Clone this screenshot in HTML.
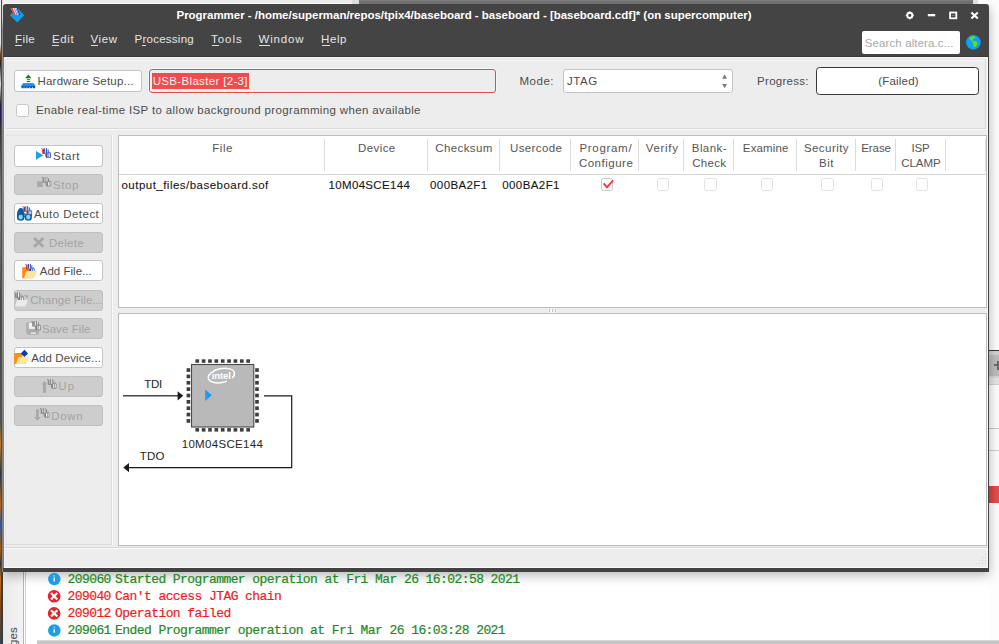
<!DOCTYPE html>
<html><head><meta charset="utf-8"><title>Programmer</title>
<style>
html,body{margin:0;padding:0;}
body{width:999px;height:644px;overflow:hidden;background:#ffffff;position:relative;font-family:"Liberation Sans",sans-serif;}
.a{position:absolute;box-sizing:border-box;}
.t{position:absolute;white-space:pre;line-height:normal;}
.btn{position:absolute;box-sizing:border-box;left:14.2px;width:88.6px;height:21.5px;border:1px solid #c4c4c4;border-radius:3px;background:#ffffff;}
.btn.d{background:#cdcdcd;border-color:#c0c0c0;}
.sep{position:absolute;top:139px;width:1px;height:32px;background:#dcdcdc;}
.cb{position:absolute;box-sizing:border-box;top:178.4px;width:12.2px;height:12.3px;border:1px solid #e2e2e2;border-radius:2.5px;background:#ffffff;}
</style></head><body>
<!-- ===== desktop / background pieces ===== -->
<!-- right of window -->
<div class="a" style="left:989px;top:4px;width:10px;height:636px;background:#fdfdfd;"></div>
<div class="a" style="left:989px;top:350px;width:10px;height:1px;background:#3a3a3a;"></div>
<div class="a" style="left:989px;top:351px;width:10px;height:4px;background:#d2d2d2;"></div>
<div class="a" style="left:989px;top:355px;width:10px;height:21px;background:#bcbcbc;"></div>
<div class="a" style="left:989px;top:376px;width:10px;height:2px;background:#d6d6d6;"></div>
<div class="a" style="left:989px;top:378px;width:10px;height:6px;background:#e4e4e4;"></div>
<div class="a" style="left:989px;top:384px;width:10px;height:1px;background:#cfcfcf;"></div>
<div class="a" style="left:994px;top:364px;width:5px;height:2px;background:#6a6a6a;"></div>
<div class="a" style="left:997px;top:361px;width:2px;height:9px;background:#6a6a6a;"></div>
<div class="a" style="left:989px;top:428px;width:10px;height:1px;background:#c8c8c8;"></div>
<div class="a" style="left:989px;top:450px;width:10px;height:1px;background:#d0d0d0;"></div>
<div class="a" style="left:989px;top:486px;width:10px;height:17px;background:linear-gradient(90deg,#d84343,#ec5050);"></div>
<!-- ===== messages panel (behind window) ===== -->
<div class="a" style="left:3px;top:572px;width:20px;height:72px;background:linear-gradient(90deg,#e9e9e9,#f4f4f4);"></div>
<div class="a" style="left:22.5px;top:572px;width:1.5px;height:72px;background:#b4b4b4;"></div>
<div class="a" style="left:24.5px;top:572px;width:1px;height:72px;background:#cfcfcf;"></div>
<div class="a" style="left:37px;top:640px;width:962px;height:1px;background:#dadada;"></div>
<div class="a" style="left:37px;top:641px;width:962px;height:3px;background:#c6c6c6;"></div>
<div class="t" style="left:6.6px;top:727.2px;width:100px;font-size:11.5px;color:#4a4a4a;transform-origin:0 0;transform:rotate(-90deg);text-align:right;letter-spacing:0.15px;">Messages</div>

<!-- ===== window ===== -->
<div class="a" id="win" style="left:3px;top:4px;width:986px;height:568px;background:#ededed;border-radius:3px 3px 0 0;box-shadow:0 3px 12px rgba(0,0,0,0.30);"></div>
<!-- top strip (desktop above window) -->
<div class="a" style="left:0;top:0;width:999px;height:4px;background:#ececec;"></div>
<div class="a" style="left:0;top:2.5px;width:352px;height:1.5px;background:#fafafa;"></div>
<div class="a" style="left:352px;top:0;width:7px;height:4px;background:#dddddd;"></div>
<div class="a" style="left:359px;top:0;width:614px;height:4px;background:#6f6f6f;"></div>
<div class="a" style="left:359px;top:0;width:614px;height:1px;background:#7c7c7c;"></div>
<div class="a" style="left:973px;top:0;width:5px;height:4px;background:#e0e0e0;"></div>
<div class="a" style="left:978px;top:0;width:21px;height:4px;background:#fbfbfb;"></div>
<!-- left sliver -->
<div class="a" style="left:0;top:4px;width:1px;height:640px;background:linear-gradient(180deg,#e8e8e8 0,#e8e8e8 40px,#7a4a20 50px,#222 60px,#ddd 80px,#223 100px,#1a1460 112px,#333 125px,#888 200px,#444 300px,#555 420px,#c87a20 440px,#234 470px,#b86a18 500px,#2a5aa0 520px,#a85a10 545px,#333 560px,#c87020 575px,#8a4a10 600px,#345 640px);"></div>
<div class="a" style="left:1px;top:0;width:1px;height:572px;background:#4c4c4c;"></div>
<div class="a" style="left:2px;top:0;width:1px;height:572px;background:linear-gradient(180deg,#dcdcdc 0,#d4d4d4 18px,#8a8a8a 30px,#848484 100%);"></div>
<div class="a" style="left:1px;top:572px;width:2px;height:72px;background:#3c3c3c;"></div>

<div class="a" style="left:3px;top:4px;width:986px;height:53px;background:#444444;border-radius:3px 3px 0 0;"></div>
<div class="a" style="left:3px;top:56px;width:986px;height:1px;background:#3a3a3a;"></div>
<div class="a" style="left:3px;top:57px;width:1px;height:511px;background:#808080;"></div>
<div class="a" style="left:987.7px;top:57px;width:1.3px;height:511px;background:#444444;"></div>
<div class="a" style="left:3px;top:568px;width:986px;height:4px;background:#424242;"></div>
<div class="a" style="left:4px;top:57px;width:984px;height:2px;background:#f0f0f0;"></div>
<div class="a" style="left:4px;top:57px;width:1px;height:511px;background:#f2f2f2;"></div>
<div class="a" style="left:986.5px;top:57px;width:1.5px;height:511px;background:#fbfbfb;"></div>
<div class="a" style="left:4px;top:566.5px;width:984px;height:1.5px;background:#fbfbfb;"></div>

<!-- menu mnemonics -->
<div class="a" style="left:15.3px;top:45px;width:6.3px;height:1px;background:#dcdcdc;"></div><div class="a" style="left:52px;top:45px;width:6.7px;height:1px;background:#dcdcdc;"></div><div class="a" style="left:90.7px;top:45px;width:7.4px;height:1px;background:#dcdcdc;"></div><div class="a" style="left:142.2px;top:45px;width:3.8px;height:1px;background:#dcdcdc;"></div><div class="a" style="left:212.1px;top:45px;width:6.6px;height:1px;background:#dcdcdc;"></div><div class="a" style="left:259px;top:45px;width:11.0px;height:1px;background:#dcdcdc;"></div><div class="a" style="left:321.5px;top:45px;width:8.0px;height:1px;background:#dcdcdc;"></div>
<!-- title bar icons -->
<svg class="a" style="left:0px;top:0px;overflow:visible" width="30" height="30" viewBox="0 0 30 30"><path d="M17.5 8 L24.3 15.3 L17.3 22.5 L9.9 15.3 Z" fill="#0c9eee"/><path d="M10.7 8 L17.6 8 L20 14.9 L14.3 14.9 Z" fill="#ffffff"/><path d="M10.7 8 L12.6 8 L15.9 14.9 L14.0 14.9 Z" fill="#f0402c"/><path d="M13.7 8.3 L14.6 8.3 L17.6 14.9 L16.7 14.9 Z" fill="#3a78d8"/><path d="M15.4 8.3 L16.2 8.3 L19.0 14.9 L18.2 14.9 Z" fill="#3a78d8"/><path d="M16.6 8 L17.8 8 L20.3 14.9 L19.2 14.9 Z" fill="#1238b0"/></svg><svg class="a" style="left:0px;top:0px;overflow:visible" width="999" height="30" viewBox="0 0 999 30"><circle cx="909.8" cy="15.35" r="2.55" fill="none" stroke="#ffffff" stroke-width="1.9"/><rect x="909.0" y="11.25" width="1.6" height="1.6" fill="#ffffff" opacity="0.75" transform="rotate(45 909.8 12.05)"/><rect x="909.0" y="17.849999999999998" width="1.6" height="1.6" fill="#ffffff" opacity="0.75" transform="rotate(45 909.8 18.65)"/><rect x="905.7" y="14.549999999999999" width="1.6" height="1.6" fill="#ffffff" opacity="0.75" transform="rotate(45 906.5 15.35)"/><rect x="912.3" y="14.549999999999999" width="1.6" height="1.6" fill="#ffffff" opacity="0.75" transform="rotate(45 913.0999999999999 15.35)"/><rect x="906.8" y="12.35" width="1.0" height="1.0" fill="#ffffff" opacity="0.5"/><rect x="911.8" y="17.35" width="1.0" height="1.0" fill="#ffffff" opacity="0.5"/><rect x="906.8" y="17.35" width="1.0" height="1.0" fill="#ffffff" opacity="0.5"/><rect x="911.8" y="12.35" width="1.0" height="1.0" fill="#ffffff" opacity="0.5"/><rect x="927.8" y="14" width="7.4" height="2.3" fill="#ffffff"/><rect x="950.1" y="12.5" width="6.2" height="5.8" fill="none" stroke="#ffffff" stroke-width="1.8"/><rect x="951.6" y="14.9" width="3.2" height="0.9" fill="#8a8a8a"/><path d="M971.4 12.4 L977.8 18.6 M977.8 12.4 L971.4 18.6" stroke="#ffffff" stroke-width="2.1" stroke-linecap="butt" fill="none"/></svg><svg class="a" style="left:966.4px;top:34.8px;overflow:visible" width="14.8" height="14.8" viewBox="0 0 14.8 14.8"><circle cx="7.4" cy="7.4" r="7.3" fill="#0ca2f6"/><path d="M3.6 2.4 Q5.8 1.0 8.9 1.4 Q9.6 2.0 9.2 2.7 L6.9 4.0 L6.3 5.3 L7.0 6.3 L9.2 6.0 Q11.2 7.0 11.6 8.1 Q11.4 9.4 10.6 10.2 L8.3 12.6 L7.6 11.6 L7.3 8.8 L6.5 7.4 L6.0 5.9 L4.2 5.1 Q3.4 4.0 3.6 2.4 Z" fill="#6ade10"/></svg>
<!-- search box -->
<div class="a" style="left:862px;top:31px;width:98px;height:22.5px;background:#ffffff;border-radius:2px;"></div>

<!-- ===== top group frame ===== -->
<div class="a" style="left:5px;top:59px;width:981px;height:70px;border:1px solid #dadada;border-top-color:#e6e6e6;border-left-color:#e6e6e6;"></div>
<div class="a" style="left:6px;top:60px;width:979px;height:1px;background:#f8f8f8;"></div>
<div class="a" style="left:5px;top:129px;width:981px;height:1px;background:#f8f8f8;"></div>
<!-- hardware setup button -->
<div class="a" style="left:14px;top:70px;width:128px;height:22px;border:1px solid #c4c4c4;border-radius:3px;background:#fff;"></div>
<!-- usb field -->
<div class="a" style="left:148.5px;top:69px;width:347.5px;height:24px;border:1.5px solid #e24c4a;border-radius:3px;background:#ededed;box-shadow:0 0 0 0.8px #f4fafa;"></div>
<div class="a" style="left:152px;top:73px;width:97px;height:16px;background:#ef4d4d;"></div>
<!-- enable checkbox -->
<div class="a" style="left:16px;top:103.5px;width:13px;height:13px;border:1px solid #c6c6c6;border-radius:2.5px;background:#fff;"></div>
<!-- combo -->
<div class="a" style="left:563px;top:69.2px;width:170px;height:23.4px;border:1px solid #c4c4c4;border-radius:3px;background:#fff;"></div>
<svg class="a" style="left:0;top:0" width="999" height="100" viewBox="0 0 999 100"><path d="M722.2 78.8 L724.6 74.3 L727 78.8 Z" fill="#787878"/><path d="M722.2 83.9 L724.6 88.2 L727 83.9 Z" fill="#787878"/></svg>
<!-- progress -->
<div class="a" style="left:816px;top:67px;width:162.5px;height:28px;border:1.6px solid #383838;border-radius:3.5px;background:#fff;"></div>

<!-- ===== left button frame ===== -->
<div class="a" style="left:5px;top:135px;width:107px;height:410px;border:1px solid #dcdcdc;border-top-color:#e2e2e2;border-left-color:#e6e6e6;"></div>
<div class="a" style="left:112px;top:135px;width:1px;height:410px;background:#f8f8f8;"></div>
<div class="btn" style="top:144.9px;height:21.9px"></div>
<div class="btn d" style="top:174px;height:21.3px"></div>
<div class="btn" style="top:203px;height:21.0px"></div>
<div class="btn d" style="top:231.6px;height:21.0px"></div>
<div class="btn" style="top:260.4px;height:21.1px"></div>
<div class="btn d" style="top:289.5px;height:21.0px"></div>
<div class="btn d" style="top:318px;height:21.3px"></div>
<div class="btn" style="top:347px;height:20.7px"></div>
<div class="btn d" style="top:376.2px;height:20.9px"></div>
<div class="btn d" style="top:405px;height:20.9px"></div>
<svg class="a" style="left:0px;top:0px;overflow:visible" width="130" height="430" viewBox="0 0 130 430"><path d="M28.3 74.6 L31.6 78.2 L25.1 78.2 Z" fill="#1a7c1a"/><rect x="26.8" y="79.2" width="3.4" height="1.0" fill="#1a7c1a"/><rect x="26.8" y="81.0" width="3.4" height="1.0" fill="#1a7c1a"/><defs><linearGradient id="hg" x1="0" y1="0" x2="0" y2="1"><stop offset="0" stop-color="#1ea4f4"/><stop offset="0.65" stop-color="#188cf0"/><stop offset="1" stop-color="#1440b8"/></linearGradient></defs><path d="M23.2 82.9 L33.4 82.9 L35.3 85.4 L35.3 87.2 L21.3 87.2 L21.3 85.4 Z" fill="url(#hg)"/><path d="M21.5 87 L23.700000000000003 87 L23.400000000000002 88.3 L21.8 88.3 Z" fill="#1a3cae"/><path d="M24.35 87 L26.550000000000004 87 L26.250000000000004 88.3 L24.650000000000002 88.3 Z" fill="#1a3cae"/><path d="M27.2 87 L29.400000000000002 87 L29.1 88.3 L27.5 88.3 Z" fill="#1a3cae"/><path d="M30.05 87 L32.25 87 L31.950000000000003 88.3 L30.35 88.3 Z" fill="#1a3cae"/><path d="M32.9 87 L35.1 87 L34.8 88.3 L33.2 88.3 Z" fill="#1a3cae"/><path d="M36 150.9 L43.3 155.3 L36 159.7 Z" fill="#1e9cf2"/><g transform="translate(41.2 148.0)"><rect x="2.6" y="0.9" width="4.2" height="4.2" fill="#ffffff"/><rect x="1.75" y="0.8" width="0.8" height="4.3" fill="#12126c"/><rect x="3.05" y="0.35" width="0.95" height="4.75" fill="#1638b4"/><rect x="4.95" y="0.2" width="0.9" height="4.9" fill="#1638b4"/><rect x="6.5" y="1.5" width="0.9" height="3.6" fill="#1638b4"/><rect x="5.05" y="4.5" width="4.75" height="5.3" rx="0.9" fill="#3a62c4"/><rect x="8.0" y="3.8" width="1.1" height="1.0" fill="#3a62c4"/><rect x="5.05" y="5.2" width="0.7" height="4.4" fill="#12126c"/><rect x="6.35" y="5.3" width="0.9" height="3.5" fill="#ffffff"/><rect x="8.0" y="5.3" width="0.9" height="3.5" fill="#ffffff"/><path d="M0.25 0.15 L1.45 1.35 L1.45 5.45 L4.6 5.45 L4.6 8.8" fill="none" stroke="#f23422" stroke-width="1.0" stroke-linejoin="miter"/></g><rect x="37.1" y="181.3" width="5.6" height="5.7" fill="#a9a9a9"/><g transform="translate(41.6 176.8)"><rect x="2.6" y="0.9" width="4.2" height="4.2" fill="#f2f2f2"/><rect x="1.75" y="0.8" width="0.8" height="4.3" fill="#7c7c7c"/><rect x="3.05" y="0.35" width="0.95" height="4.75" fill="#7c7c7c"/><rect x="4.95" y="0.2" width="0.9" height="4.9" fill="#7c7c7c"/><rect x="6.5" y="1.5" width="0.9" height="3.6" fill="#7c7c7c"/><rect x="5.05" y="4.5" width="4.75" height="5.3" rx="0.9" fill="#8e8e8e"/><rect x="8.0" y="3.8" width="1.1" height="1.0" fill="#8e8e8e"/><rect x="5.05" y="5.2" width="0.7" height="4.4" fill="#7c7c7c"/><rect x="6.35" y="5.3" width="0.9" height="3.5" fill="#f6f6f6"/><rect x="8.0" y="5.3" width="0.9" height="3.5" fill="#f6f6f6"/><path d="M0.25 0.15 L1.45 1.35 L1.45 5.45 L4.6 5.45 L4.6 8.8" fill="none" stroke="#858585" stroke-width="1.0" stroke-linejoin="miter"/></g><path d="M17 215 Q17 211 18.6 209.2 Q19.4 208 20.8 208 Q22.4 208 23.2 209.4 Q24.5 211.5 24.5 215 L24.5 217.4 Q24.5 220.7 20.75 220.7 Q17 220.7 17 217.4 Z" fill="#0a5ca4"/><g transform="translate(22.3 205.9)"><rect x="2.6" y="0.9" width="4.2" height="4.2" fill="#ffffff"/><rect x="1.75" y="0.8" width="0.8" height="4.3" fill="#12126c"/><rect x="3.05" y="0.35" width="0.95" height="4.75" fill="#1638b4"/><rect x="4.95" y="0.2" width="0.9" height="4.9" fill="#1638b4"/><rect x="6.5" y="1.5" width="0.9" height="3.6" fill="#1638b4"/><rect x="5.05" y="4.5" width="4.75" height="5.3" rx="0.9" fill="#3a62c4"/><rect x="8.0" y="3.8" width="1.1" height="1.0" fill="#3a62c4"/><rect x="5.05" y="5.2" width="0.7" height="4.4" fill="#12126c"/><rect x="6.35" y="5.3" width="0.9" height="3.5" fill="#ffffff"/><rect x="8.0" y="5.3" width="0.9" height="3.5" fill="#ffffff"/><path d="M0.25 0.15 L1.45 1.35 L1.45 5.45 L4.6 5.45 L4.6 8.8" fill="none" stroke="#f23422" stroke-width="1.0" stroke-linejoin="miter"/></g><path d="M24.8 214.2 L31.9 214.2 L31.9 217.4 Q31.9 220.7 28.35 220.7 Q24.8 220.7 24.8 217.4 Z" fill="#0a5ca4"/><rect x="23.6" y="213.4" width="2" height="3.4" fill="#0a5ca4"/><ellipse cx="20.7" cy="217.1" rx="2.2" ry="2.4" fill="#86d6f8"/><ellipse cx="28.3" cy="217.1" rx="2.2" ry="2.4" fill="#86d6f8"/><rect x="24" y="214.4" width="1.2" height="1.2" fill="#6ab0dc"/><path d="M34 238 L43.4 246.8 M43.4 238 L34 246.8" stroke="#a6a6a6" stroke-width="2.7" fill="none"/><path d="M22.2 267.3 L26 267.3 L27 268.6 L29.7 268.6 L29.7 278.3 L22.2 278.3 Z" fill="#ff8c0a"/><g transform="translate(24.9 263.7)"><rect x="2.6" y="0.9" width="4.2" height="4.2" fill="#ffffff"/><rect x="1.75" y="0.8" width="0.8" height="4.3" fill="#12126c"/><rect x="3.05" y="0.35" width="0.95" height="4.75" fill="#1638b4"/><rect x="4.95" y="0.2" width="0.9" height="4.9" fill="#1638b4"/><rect x="6.5" y="1.5" width="0.9" height="3.6" fill="#1638b4"/><rect x="5.05" y="4.5" width="4.75" height="5.3" rx="0.9" fill="#3a62c4"/><rect x="8.0" y="3.8" width="1.1" height="1.0" fill="#3a62c4"/><rect x="5.05" y="5.2" width="0.7" height="4.4" fill="#12126c"/><rect x="6.35" y="5.3" width="0.9" height="3.5" fill="#ffffff"/><rect x="8.0" y="5.3" width="0.9" height="3.5" fill="#ffffff"/><path d="M0.25 0.15 L1.45 1.35 L1.45 5.45 L4.6 5.45 L4.6 8.8" fill="none" stroke="#f23422" stroke-width="1.0" stroke-linejoin="miter"/></g><path d="M26.3 271 L36.9 271 L34.3 278.3 L24 278.3 Z" fill="#ffe4a0"/><path d="M14.6 297.6 L20 297.6 L20 306.6 L14.6 306.6 Z" fill="#c4c4c4"/><g transform="translate(14.0 292.1)"><rect x="2.6" y="0.9" width="4.2" height="4.2" fill="#f2f2f2"/><rect x="1.75" y="0.8" width="0.8" height="4.3" fill="#7c7c7c"/><rect x="3.05" y="0.35" width="0.95" height="4.75" fill="#7c7c7c"/><rect x="4.95" y="0.2" width="0.9" height="4.9" fill="#7c7c7c"/><rect x="6.5" y="1.5" width="0.9" height="3.6" fill="#7c7c7c"/><rect x="5.05" y="4.5" width="4.75" height="5.3" rx="0.9" fill="#8e8e8e"/><rect x="8.0" y="3.8" width="1.1" height="1.0" fill="#8e8e8e"/><rect x="5.05" y="5.2" width="0.7" height="4.4" fill="#7c7c7c"/><rect x="6.35" y="5.3" width="0.9" height="3.5" fill="#f6f6f6"/><rect x="8.0" y="5.3" width="0.9" height="3.5" fill="#f6f6f6"/><path d="M0.25 0.15 L1.45 1.35 L1.45 5.45 L4.6 5.45 L4.6 8.8" fill="none" stroke="#858585" stroke-width="1.0" stroke-linejoin="miter"/></g><path d="M17.2 300.1 L28 300.1 L25 306.6 L14.8 306.6 Z" fill="#ebebeb"/><path d="M22.4 297.6 Q24.5 293.4 27 296.6" fill="none" stroke="#a4a4a4" stroke-width="0.9"/><path d="M27.9 294.4 L27.8 297.9 L25.1 296.9 Z" fill="#a4a4a4"/><path d="M26.1 322.4 L37 322.4 L39 324 L39 334.5 L27.6 334.5 L26.1 333 Z" fill="#b0b0b0"/><rect x="28.8" y="323" width="6.2" height="5.9" fill="#f2f2f2"/><rect x="29.4" y="330.8" width="7.4" height="3.7" fill="#a4a4a4"/><rect x="30.6" y="332.4" width="5.4" height="1.4" fill="#f2f2f2"/><g transform="translate(31.2 320.7)"><rect x="2.6" y="0.9" width="4.2" height="4.2" fill="#f2f2f2"/><rect x="1.75" y="0.8" width="0.8" height="4.3" fill="#7c7c7c"/><rect x="3.05" y="0.35" width="0.95" height="4.75" fill="#7c7c7c"/><rect x="4.95" y="0.2" width="0.9" height="4.9" fill="#7c7c7c"/><rect x="6.5" y="1.5" width="0.9" height="3.6" fill="#7c7c7c"/><rect x="5.05" y="4.5" width="4.75" height="5.3" rx="0.9" fill="#8e8e8e"/><rect x="8.0" y="3.8" width="1.1" height="1.0" fill="#8e8e8e"/><rect x="5.05" y="5.2" width="0.7" height="4.4" fill="#7c7c7c"/><rect x="6.35" y="5.3" width="0.9" height="3.5" fill="#f6f6f6"/><rect x="8.0" y="5.3" width="0.9" height="3.5" fill="#f6f6f6"/><path d="M0.25 0.15 L1.45 1.35 L1.45 5.45 L4.6 5.45 L4.6 8.8" fill="none" stroke="#858585" stroke-width="1.0" stroke-linejoin="miter"/></g><path d="M14.2 352.9 L21 352.9 L22.4 354.4 L22.4 363.9 L14.2 363.9 Z" fill="#ff900a"/><path d="M18.3 357 L29 357 L26.3 363.9 L16.1 363.9 Z" fill="#ffe4a0"/><path d="M24.5 349.8 L28.1 353.5 L24.5 357 L20.8 353.5 Z" fill="#0b3eaa"/><path d="M44.5 381 L47.4 384.6 L46.1 384.6 L46.1 392.7 L42.9 392.7 L42.9 384.6 L41.4 384.6 Z" fill="#a8a8a8"/><g transform="translate(46.8 378.9)"><rect x="2.6" y="0.9" width="4.2" height="4.2" fill="#f2f2f2"/><rect x="1.75" y="0.8" width="0.8" height="4.3" fill="#7c7c7c"/><rect x="3.05" y="0.35" width="0.95" height="4.75" fill="#7c7c7c"/><rect x="4.95" y="0.2" width="0.9" height="4.9" fill="#7c7c7c"/><rect x="6.5" y="1.5" width="0.9" height="3.6" fill="#7c7c7c"/><rect x="5.05" y="4.5" width="4.75" height="5.3" rx="0.9" fill="#8e8e8e"/><rect x="8.0" y="3.8" width="1.1" height="1.0" fill="#8e8e8e"/><rect x="5.05" y="5.2" width="0.7" height="4.4" fill="#7c7c7c"/><rect x="6.35" y="5.3" width="0.9" height="3.5" fill="#f6f6f6"/><rect x="8.0" y="5.3" width="0.9" height="3.5" fill="#f6f6f6"/><path d="M0.25 0.15 L1.45 1.35 L1.45 5.45 L4.6 5.45 L4.6 8.8" fill="none" stroke="#858585" stroke-width="1.0" stroke-linejoin="miter"/></g><path d="M36 409.2 L38.8 409.2 L38.8 416.9 L40.8 416.9 L37.4 420.7 L34 416.9 L36 416.9 Z" fill="#a8a8a8"/><g transform="translate(39.7 407.9)"><rect x="2.6" y="0.9" width="4.2" height="4.2" fill="#f2f2f2"/><rect x="1.75" y="0.8" width="0.8" height="4.3" fill="#7c7c7c"/><rect x="3.05" y="0.35" width="0.95" height="4.75" fill="#7c7c7c"/><rect x="4.95" y="0.2" width="0.9" height="4.9" fill="#7c7c7c"/><rect x="6.5" y="1.5" width="0.9" height="3.6" fill="#7c7c7c"/><rect x="5.05" y="4.5" width="4.75" height="5.3" rx="0.9" fill="#8e8e8e"/><rect x="8.0" y="3.8" width="1.1" height="1.0" fill="#8e8e8e"/><rect x="5.05" y="5.2" width="0.7" height="4.4" fill="#7c7c7c"/><rect x="6.35" y="5.3" width="0.9" height="3.5" fill="#f6f6f6"/><rect x="8.0" y="5.3" width="0.9" height="3.5" fill="#f6f6f6"/><path d="M0.25 0.15 L1.45 1.35 L1.45 5.45 L4.6 5.45 L4.6 8.8" fill="none" stroke="#858585" stroke-width="1.0" stroke-linejoin="miter"/></g></svg>

<!-- ===== table ===== -->
<div class="a" style="left:118px;top:135px;width:869px;height:173px;border:1px solid #bdbdbd;background:#fff;"></div>
<div class="a" style="left:119px;top:174px;width:867px;height:1px;background:#d4d4d4;"></div>
<div class="sep" style="left:323.5px"></div><div class="sep" style="left:426.5px"></div><div class="sep" style="left:498.5px"></div>
<div class="sep" style="left:570px"></div><div class="sep" style="left:638px"></div><div class="sep" style="left:683.3px"></div>
<div class="sep" style="left:732.5px"></div><div class="sep" style="left:795.6px"></div><div class="sep" style="left:854.5px"></div>
<div class="sep" style="left:894.8px"></div><div class="sep" style="left:944.5px"></div><div class="sep" style="left:984.5px"></div>
<!-- row checkboxes -->
<div class="cb" style="left:601px;border-color:#c8c8c8;"></div>
<svg class="a" style="left:601px;top:178.4px;overflow:visible" width="13" height="13" viewBox="0 0 13 13"><path d="M2.7 5.3 L6.0 9.3 L12.1 2.3" fill="none" stroke="#ee3b3b" stroke-width="1.9" stroke-linecap="butt" stroke-linejoin="miter"/></svg>
<div class="cb" style="left:657px"></div>
<div class="cb" style="left:704.4px"></div>
<div class="cb" style="left:760.6px"></div>
<div class="cb" style="left:821.4px"></div>
<div class="cb" style="left:871px"></div>
<div class="cb" style="left:915.7px"></div>
<!-- splitter handle -->
<div class="a" style="left:548px;top:308.6px;width:9.4px;height:4px;background:#f8f8f8;"></div>
<div class="a" style="left:549.3px;top:309.2px;width:1px;height:2.8px;background:#c2c2c2;"></div>
<div class="a" style="left:552.1px;top:309.2px;width:1px;height:2.8px;background:#c2c2c2;"></div>
<div class="a" style="left:554.9px;top:309.2px;width:1px;height:2.8px;background:#c2c2c2;"></div>

<!-- ===== chain view ===== -->
<div class="a" style="left:118px;top:313px;width:869px;height:233px;border:1px solid #bdbdbd;background:#fff;"></div>
<svg class="a" style="left:0px;top:0px;overflow:visible" width="999" height="644" viewBox="0 0 999 644"><rect x="195.40" y="359.3" width="3.7" height="3.5" fill="#3e3e3e"/><rect x="195.40" y="428.1" width="3.7" height="3.5" fill="#3e3e3e"/><rect x="186.6" y="368.20" width="3.6" height="3.7" fill="#3e3e3e"/><rect x="255.2" y="368.20" width="3.6" height="3.7" fill="#3e3e3e"/><rect x="201.76" y="359.3" width="3.7" height="3.5" fill="#3e3e3e"/><rect x="201.76" y="428.1" width="3.7" height="3.5" fill="#3e3e3e"/><rect x="186.6" y="374.56" width="3.6" height="3.7" fill="#3e3e3e"/><rect x="255.2" y="374.56" width="3.6" height="3.7" fill="#3e3e3e"/><rect x="208.12" y="359.3" width="3.7" height="3.5" fill="#3e3e3e"/><rect x="208.12" y="428.1" width="3.7" height="3.5" fill="#3e3e3e"/><rect x="186.6" y="380.92" width="3.6" height="3.7" fill="#3e3e3e"/><rect x="255.2" y="380.92" width="3.6" height="3.7" fill="#3e3e3e"/><rect x="214.48" y="359.3" width="3.7" height="3.5" fill="#3e3e3e"/><rect x="214.48" y="428.1" width="3.7" height="3.5" fill="#3e3e3e"/><rect x="186.6" y="387.28" width="3.6" height="3.7" fill="#3e3e3e"/><rect x="255.2" y="387.28" width="3.6" height="3.7" fill="#3e3e3e"/><rect x="220.84" y="359.3" width="3.7" height="3.5" fill="#3e3e3e"/><rect x="220.84" y="428.1" width="3.7" height="3.5" fill="#3e3e3e"/><rect x="186.6" y="393.64" width="3.6" height="3.7" fill="#3e3e3e"/><rect x="255.2" y="393.64" width="3.6" height="3.7" fill="#3e3e3e"/><rect x="227.20" y="359.3" width="3.7" height="3.5" fill="#3e3e3e"/><rect x="227.20" y="428.1" width="3.7" height="3.5" fill="#3e3e3e"/><rect x="186.6" y="400.00" width="3.6" height="3.7" fill="#3e3e3e"/><rect x="255.2" y="400.00" width="3.6" height="3.7" fill="#3e3e3e"/><rect x="233.56" y="359.3" width="3.7" height="3.5" fill="#3e3e3e"/><rect x="233.56" y="428.1" width="3.7" height="3.5" fill="#3e3e3e"/><rect x="186.6" y="406.36" width="3.6" height="3.7" fill="#3e3e3e"/><rect x="255.2" y="406.36" width="3.6" height="3.7" fill="#3e3e3e"/><rect x="239.92" y="359.3" width="3.7" height="3.5" fill="#3e3e3e"/><rect x="239.92" y="428.1" width="3.7" height="3.5" fill="#3e3e3e"/><rect x="186.6" y="412.72" width="3.6" height="3.7" fill="#3e3e3e"/><rect x="255.2" y="412.72" width="3.6" height="3.7" fill="#3e3e3e"/><rect x="246.28" y="359.3" width="3.7" height="3.5" fill="#3e3e3e"/><rect x="246.28" y="428.1" width="3.7" height="3.5" fill="#3e3e3e"/><rect x="186.6" y="419.08" width="3.6" height="3.7" fill="#3e3e3e"/><rect x="255.2" y="419.08" width="3.6" height="3.7" fill="#3e3e3e"/><rect x="191.5" y="364.5" width="62.3" height="62.5" fill="#b9b9b9" stroke="#4a4a4a" stroke-width="1.1"/><path d="M205.2 389.4 L211.9 395.2 L205.2 401 Z" fill="#1e9cf2"/><rect x="123" y="395.2" width="55" height="1.2" fill="#1a1a1a"/><path d="M177.6 391.3 L183.2 395.8 L177.6 400.4 Z" fill="#1a1a1a"/><path d="M264 395.8 L291.7 395.8 L291.7 467.6 L128.5 467.6" fill="none" stroke="#1a1a1a" stroke-width="1.2"/><path d="M129 463 L123.3 467.6 L129 472.2 Z" fill="#1a1a1a"/><g transform="rotate(-12 221.4 375.6)"><ellipse cx="221.4" cy="375.6" rx="13.3" ry="6.9" fill="none" stroke="#ffffff" stroke-width="1.5" stroke-dasharray="62 6" stroke-dashoffset="-12"/></g><text x="221.2" y="378.6" text-anchor="middle" font-family="Liberation Sans" font-size="9.6" font-weight="700" fill="#ffffff" letter-spacing="-0.15">intel</text></svg>

<!-- status bar -->
<div class="a" style="left:5px;top:547px;width:982px;height:1px;background:#d6d6d6;"></div>
<div class="a" style="left:5px;top:548px;width:982px;height:1px;background:#fafafa;"></div>
<svg class="a" style="left:0px;top:0px;overflow:visible" width="999" height="644" viewBox="0 0 999 644"><rect x="985" y="554" width="1.3" height="1.3" fill="#dcdcdc"/><rect x="982" y="557" width="1.3" height="1.3" fill="#dcdcdc"/><rect x="985" y="557" width="1.3" height="1.3" fill="#dcdcdc"/><rect x="979" y="560" width="1.3" height="1.3" fill="#dcdcdc"/><rect x="982" y="560" width="1.3" height="1.3" fill="#dcdcdc"/><rect x="985" y="560" width="1.3" height="1.3" fill="#dcdcdc"/><rect x="976" y="563" width="1.3" height="1.3" fill="#dcdcdc"/><rect x="979" y="563" width="1.3" height="1.3" fill="#dcdcdc"/><rect x="982" y="563" width="1.3" height="1.3" fill="#dcdcdc"/><rect x="985" y="563" width="1.3" height="1.3" fill="#dcdcdc"/></svg>

<!-- message icons -->
<svg class="a" style="left:0px;top:0px;overflow:visible" width="100" height="644" viewBox="0 0 100 644"><circle cx="54.3" cy="579.1" r="6.25" fill="#1e9ce8"/><rect x="53.5" y="577.8000000000001" width="1.5" height="3.6" fill="#fff"/><rect x="53.5" y="575.2" width="1.5" height="1.6" fill="#fff" opacity="0.55"/><circle cx="54.15" cy="596.3" r="6.3" fill="#e8202a"/><path d="M51.0 593.0999999999999 L57.3 599.5 M57.3 593.0999999999999 L51.0 599.5" stroke="#fff" stroke-width="2.2" fill="none"/><circle cx="54.15" cy="613.4" r="6.3" fill="#e8202a"/><path d="M51.0 610.1999999999999 L57.3 616.6 M57.3 610.1999999999999 L51.0 616.6" stroke="#fff" stroke-width="2.2" fill="none"/><circle cx="54.3" cy="630.4" r="6.25" fill="#1e9ce8"/><rect x="53.5" y="629.1" width="1.5" height="3.6" fill="#fff"/><rect x="53.5" y="626.5" width="1.5" height="1.6" fill="#fff" opacity="0.55"/></svg>

<!-- ===== text ===== -->
<span class="t" style="left:176.50px;top:9.00px;font-size:11.5px;font-weight:700;color:#ffffff;font-family:'Liberation Sans';letter-spacing:-0.027px;">Programmer - /home/superman/repos/tpix4/baseboard - baseboard - [baseboard.cdf]* (on supercomputer)</span>
<span class="t" style="left:15.10px;top:33.00px;font-size:11.5px;font-weight:400;color:#e6e6e6;font-family:'Liberation Sans';letter-spacing:0.356px;">File</span>
<span class="t" style="left:51.90px;top:33.00px;font-size:11.5px;font-weight:400;color:#e6e6e6;font-family:'Liberation Sans';letter-spacing:0.624px;">Edit</span>
<span class="t" style="left:90.50px;top:33.00px;font-size:11.5px;font-weight:400;color:#e6e6e6;font-family:'Liberation Sans';letter-spacing:0.594px;">View</span>
<span class="t" style="left:134.50px;top:33.00px;font-size:11.5px;font-weight:400;color:#e6e6e6;font-family:'Liberation Sans';letter-spacing:0.257px;">Processing</span>
<span class="t" style="left:211.00px;top:33.00px;font-size:11.5px;font-weight:400;color:#e6e6e6;font-family:'Liberation Sans';letter-spacing:0.985px;">Tools</span>
<span class="t" style="left:258.50px;top:33.00px;font-size:11.5px;font-weight:400;color:#e6e6e6;font-family:'Liberation Sans';letter-spacing:0.819px;">Window</span>
<span class="t" style="left:321.00px;top:33.00px;font-size:11.5px;font-weight:400;color:#e6e6e6;font-family:'Liberation Sans';letter-spacing:0.615px;">Help</span>
<span class="t" style="left:864.80px;top:37.00px;font-size:11.5px;font-weight:400;color:#a8a8a8;font-family:'Liberation Sans';letter-spacing:0.104px;">Search altera.c...</span>
<span class="t" style="left:37.50px;top:75.00px;font-size:11.5px;font-weight:400;color:#4c4c4c;font-family:'Liberation Sans';letter-spacing:0.207px;">Hardware Setup...</span>
<span class="t" style="left:152.70px;top:75.00px;font-size:11.5px;font-weight:400;color:#fff4f4;font-family:'Liberation Sans';letter-spacing:0.332px;">USB-Blaster [2-3]</span>
<span class="t" style="left:519.50px;top:75.00px;font-size:11.5px;font-weight:400;color:#4c4c4c;font-family:'Liberation Sans';letter-spacing:0.508px;">Mode:</span>
<span class="t" style="left:567.00px;top:75.00px;font-size:11.5px;font-weight:400;color:#4c4c4c;font-family:'Liberation Sans';letter-spacing:0.518px;">JTAG</span>
<span class="t" style="left:757.10px;top:75.00px;font-size:11.5px;font-weight:400;color:#4c4c4c;font-family:'Liberation Sans';letter-spacing:0.273px;">Progress:</span>
<span class="t" style="left:878.20px;top:75.00px;font-size:11.5px;font-weight:400;color:#4c4c4c;font-family:'Liberation Sans';letter-spacing:0.202px;">(Failed)</span>
<span class="t" style="left:36.00px;top:104.00px;font-size:11.5px;font-weight:400;color:#4c4c4c;font-family:'Liberation Sans';letter-spacing:0.357px;">Enable real-time ISP to allow background programming when available</span>
<span class="t" style="left:52.90px;top:150.00px;font-size:11.5px;font-weight:400;color:#4c4c4c;font-family:'Liberation Sans';letter-spacing:0.576px;">Start</span>
<span class="t" style="left:52.90px;top:179.00px;font-size:11.5px;font-weight:400;color:#a3a3a3;font-family:'Liberation Sans';letter-spacing:0.643px;">Stop</span>
<span class="t" style="left:34.10px;top:208.00px;font-size:11.5px;font-weight:400;color:#4c4c4c;font-family:'Liberation Sans';letter-spacing:0.461px;">Auto Detect</span>
<span class="t" style="left:48.90px;top:237.00px;font-size:11.5px;font-weight:400;color:#a3a3a3;font-family:'Liberation Sans';letter-spacing:0.310px;">Delete</span>
<span class="t" style="left:39.70px;top:265.00px;font-size:11.5px;font-weight:400;color:#4c4c4c;font-family:'Liberation Sans';letter-spacing:0.032px;">Add File...</span>
<span class="t" style="left:30.30px;top:294.00px;font-size:11.5px;font-weight:400;color:#a3a3a3;font-family:'Liberation Sans';letter-spacing:-0.001px;">Change File...</span>
<span class="t" style="left:41.90px;top:323.00px;font-size:11.5px;font-weight:400;color:#a3a3a3;font-family:'Liberation Sans';letter-spacing:0.083px;">Save File</span>
<span class="t" style="left:31.30px;top:352.00px;font-size:11.5px;font-weight:400;color:#4c4c4c;font-family:'Liberation Sans';letter-spacing:0.099px;">Add Device...</span>
<span class="t" style="left:58.30px;top:380.00px;font-size:11.5px;font-weight:400;color:#a3a3a3;font-family:'Liberation Sans';letter-spacing:1.197px;">Up</span>
<span class="t" style="left:51.30px;top:410.00px;font-size:11.5px;font-weight:400;color:#a3a3a3;font-family:'Liberation Sans';letter-spacing:0.631px;">Down</span>
<span class="t" style="left:212.20px;top:142.00px;font-size:11.5px;font-weight:400;color:#555555;font-family:'Liberation Sans';letter-spacing:0.556px;">File</span>
<span class="t" style="left:358.00px;top:142.00px;font-size:11.5px;font-weight:400;color:#555555;font-family:'Liberation Sans';letter-spacing:0.409px;">Device</span>
<span class="t" style="left:435.30px;top:142.00px;font-size:11.5px;font-weight:400;color:#555555;font-family:'Liberation Sans';letter-spacing:0.382px;">Checksum</span>
<span class="t" style="left:510.00px;top:142.00px;font-size:11.5px;font-weight:400;color:#555555;font-family:'Liberation Sans';letter-spacing:0.369px;">Usercode</span>
<span class="t" style="left:579.40px;top:142.00px;font-size:11.5px;font-weight:400;color:#555555;font-family:'Liberation Sans';letter-spacing:0.700px;">Program/</span>
<span class="t" style="left:578.90px;top:157.00px;font-size:11.5px;font-weight:400;color:#555555;font-family:'Liberation Sans';letter-spacing:0.503px;">Configure</span>
<span class="t" style="left:645.70px;top:142.00px;font-size:11.5px;font-weight:400;color:#555555;font-family:'Liberation Sans';letter-spacing:0.687px;">Verify</span>
<span class="t" style="left:691.80px;top:142.00px;font-size:11.5px;font-weight:400;color:#555555;font-family:'Liberation Sans';letter-spacing:0.418px;">Blank-</span>
<span class="t" style="left:692.30px;top:157.00px;font-size:11.5px;font-weight:400;color:#555555;font-family:'Liberation Sans';letter-spacing:0.273px;">Check</span>
<span class="t" style="left:742.80px;top:142.00px;font-size:11.5px;font-weight:400;color:#555555;font-family:'Liberation Sans';letter-spacing:0.158px;">Examine</span>
<span class="t" style="left:803.90px;top:142.00px;font-size:11.5px;font-weight:400;color:#555555;font-family:'Liberation Sans';letter-spacing:0.450px;">Security</span>
<span class="t" style="left:818.90px;top:157.00px;font-size:11.5px;font-weight:400;color:#555555;font-family:'Liberation Sans';letter-spacing:0.589px;">Bit</span>
<span class="t" style="left:861.20px;top:142.00px;font-size:11.5px;font-weight:400;color:#555555;font-family:'Liberation Sans';letter-spacing:-0.062px;">Erase</span>
<span class="t" style="left:911.60px;top:142.00px;font-size:11.5px;font-weight:400;color:#555555;font-family:'Liberation Sans';letter-spacing:-0.273px;">ISP</span>
<span class="t" style="left:901.20px;top:157.00px;font-size:11.5px;font-weight:400;color:#555555;font-family:'Liberation Sans';letter-spacing:-0.031px;">CLAMP</span>
<span class="t" style="left:121.50px;top:179.00px;font-size:11.5px;font-weight:400;color:#151515;font-family:'Liberation Sans';letter-spacing:0.476px;-webkit-text-stroke:0.1px #151515;">output_files/baseboard.sof</span>
<span class="t" style="left:328.60px;top:179.00px;font-size:11.5px;font-weight:400;color:#151515;font-family:'Liberation Sans';letter-spacing:0.320px;-webkit-text-stroke:0.1px #151515;">10M04SCE144</span>
<span class="t" style="left:430.10px;top:179.00px;font-size:11.5px;font-weight:400;color:#151515;font-family:'Liberation Sans';letter-spacing:0.377px;-webkit-text-stroke:0.1px #151515;">000BA2F1</span>
<span class="t" style="left:502.20px;top:179.00px;font-size:11.5px;font-weight:400;color:#151515;font-family:'Liberation Sans';letter-spacing:0.420px;-webkit-text-stroke:0.1px #151515;">000BA2F1</span>
<span class="t" style="left:144.20px;top:378.00px;font-size:11.5px;font-weight:400;color:#262626;font-family:'Liberation Sans';letter-spacing:-0.216px;">TDI</span>
<span class="t" style="left:139.70px;top:450.00px;font-size:11.5px;font-weight:400;color:#262626;font-family:'Liberation Sans';letter-spacing:0.259px;">TDO</span>
<span class="t" style="left:181.70px;top:438.00px;font-size:11.5px;font-weight:400;color:#262626;font-family:'Liberation Sans';letter-spacing:0.320px;">10M04SCE144</span>
<span class="t" style="left:67.50px;top:572.00px;font-size:13px;font-weight:400;color:#1e8a1e;font-family:'Liberation Mono';letter-spacing:-0.58px;-webkit-text-stroke:0.2px #1e8a1e;">209060</span>
<span class="t" style="left:115.10px;top:572.00px;font-size:13px;font-weight:400;color:#1e8a1e;font-family:'Liberation Mono';letter-spacing:-0.58px;-webkit-text-stroke:0.2px #1e8a1e;">Started Programmer operation at Fri Mar 26 16:02:58 2021</span>
<span class="t" style="left:67.50px;top:589.00px;font-size:13px;font-weight:400;color:#ee1c1c;font-family:'Liberation Mono';letter-spacing:-0.58px;-webkit-text-stroke:0.2px #ee1c1c;">209040</span>
<span class="t" style="left:115.10px;top:589.00px;font-size:13px;font-weight:400;color:#ee1c1c;font-family:'Liberation Mono';letter-spacing:-0.58px;-webkit-text-stroke:0.2px #ee1c1c;">Can't access JTAG chain</span>
<span class="t" style="left:67.50px;top:606.00px;font-size:13px;font-weight:400;color:#ee1c1c;font-family:'Liberation Mono';letter-spacing:-0.58px;-webkit-text-stroke:0.2px #ee1c1c;">209012</span>
<span class="t" style="left:115.10px;top:606.00px;font-size:13px;font-weight:400;color:#ee1c1c;font-family:'Liberation Mono';letter-spacing:-0.58px;-webkit-text-stroke:0.2px #ee1c1c;">Operation failed</span>
<span class="t" style="left:67.50px;top:623.00px;font-size:13px;font-weight:400;color:#1e8a1e;font-family:'Liberation Mono';letter-spacing:-0.58px;-webkit-text-stroke:0.2px #1e8a1e;">209061</span>
<span class="t" style="left:115.10px;top:623.00px;font-size:13px;font-weight:400;color:#1e8a1e;font-family:'Liberation Mono';letter-spacing:-0.58px;-webkit-text-stroke:0.2px #1e8a1e;">Ended Programmer operation at Fri Mar 26 16:03:28 2021</span>
</body></html>
